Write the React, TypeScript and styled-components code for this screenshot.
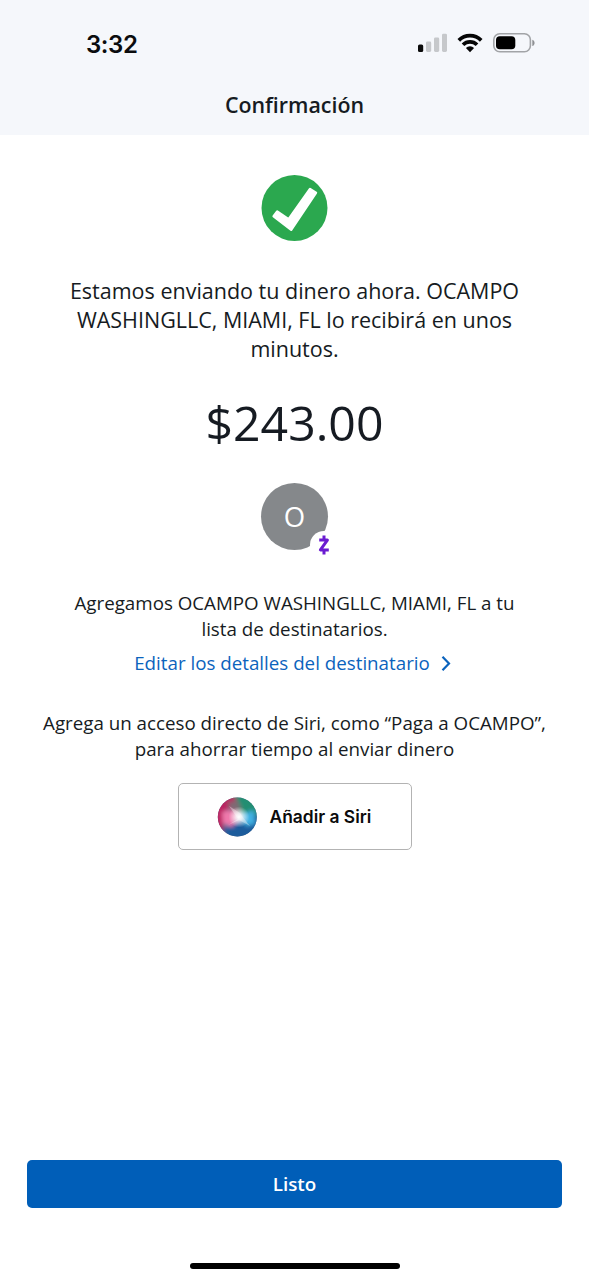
import React from 'react';
import styled, { createGlobalStyle } from 'styled-components';

const GlobalStyle = createGlobalStyle`
  *{box-sizing:border-box}
  body{margin:0;background:#fff}
`;
const Screen = styled.main`
  width:589px;height:1280px;display:flex;flex-direction:column;align-items:center;
  background:#fff;color:#161b22;font-family:"Open Sans",sans-serif;text-align:center;
`;
const Header = styled.header`width:100%;height:135px;background:#f5f7fb;`;
const StatusBar = styled.div`
  display:flex;justify-content:space-between;align-items:center;height:86px;padding:3px 53px 0 86px;
`;
const Time = styled.span`font:600 24px/30px Inter,sans-serif;color:#0b0c0e;letter-spacing:-.4px;`;
const StatusIcons = styled.div`display:flex;align-items:center;gap:10px;margin-top:-3px;`;
const Title = styled.h1`margin:3px 0 0;font-size:21.4px;line-height:32px;font-weight:580;`;
const Check = styled.svg`display:block;margin-top:40px;`;
const Text = styled.p<{ $size: number; $line: number; $top: number }>`
  margin:${p => p.$top}px 0 0;font-size:${p => p.$size}px;line-height:${p => p.$line}px;white-space:nowrap;
`;
const Avatar = styled.div`
  position:relative;width:67px;height:67px;margin-top:28px;border-radius:50%;background:#85888b;color:#fff;
  font-size:27.5px;line-height:67px;
`;
const Badge = styled.svg`position:absolute;left:49px;top:48px;`;
const EditLink = styled.a`
  display:flex;align-items:center;gap:11px;margin-top:8px;margin-right:4px;color:#0b63bd;font-size:18.75px;line-height:26px;white-space:nowrap;
`;
const SiriButton = styled.button`
  display:flex;align-items:center;width:234px;height:67px;margin-top:21px;padding:0 0 0 38px;gap:13px;
  border:1.5px solid #b3b3b3;border-radius:5px;background:#fff;color:#0b0b0b;font:600 17.4px Inter,sans-serif;white-space:nowrap;
`;
const DoneButton = styled.button`
  width:535px;height:48px;margin-top:auto;padding:0 0 1px;border:0;border-radius:5px;background:#005eb8;color:#fff;
  font:550 18.8px/26px "Open Sans",sans-serif;
`;
const HomeIndicator = styled.div`width:210px;height:6px;margin:55px 0 11px;border-radius:3px;background:#000;`;

function SignalIcon() {
  return (
    <svg width="29" height="20" viewBox="0 0 29 20">
      <rect x="0" y="11.5" width="5.2" height="7.5" rx="1.6" fill="#0b0b0b" />
      <g fill="#c6c8cb">
        <rect x="8" y="8.5" width="5.2" height="10.5" rx="1.4" />
        <rect x="16" y="4.5" width="5.2" height="14.5" rx="1.4" />
        <rect x="24" y="0.7" width="5" height="18.3" rx="1.4" />
      </g>
    </svg>
  );
}

function WifiIcon() {
  return (
    <svg width="26" height="20" viewBox="0 0 26 20">
      <g fill="none" stroke="#050505" strokeWidth="3.7">
        <path d="M1.8 7.4C8 1.1 18 1.1 24.2 7.4" />
        <path d="M6 11.7c3.9-3.9 10.1-3.9 14 0" />
      </g>
      <path d="M8.9 15a5.9 5.9 0 0 1 8.2 0L13 19.2z" fill="#050505" />
    </svg>
  );
}

function BatteryIcon() {
  return (
    <svg width="43" height="20" viewBox="0 0 43 20">
      <rect x="0.8" y="0.8" width="36.6" height="18" rx="6" fill="none" stroke="#a2a4a7" strokeWidth="1.6" />
      <rect x="3" y="3.3" width="19.3" height="13" rx="3.8" fill="#000" />
      <path d="M39.3 6.7c3 1 3 5.4 0 6.4z" fill="#8e9093" />
    </svg>
  );
}

function SiriOrb() {
  return (
    <svg width="40" height="40" viewBox="0 0 40 40">
      <defs>
        <clipPath id="orb"><circle cx="20.3" cy="20" r="19.5" /></clipPath>
        <filter id="soft" x="-30%" y="-30%" width="160%" height="160%"><feGaussianBlur stdDeviation="1.9" /></filter>
        <radialGradient id="glow">
          <stop offset="0" stopColor="#fff" />
          <stop offset=".3" stopColor="#fff" stopOpacity=".8" />
          <stop offset="1" stopColor="#fff" stopOpacity="0" />
        </radialGradient>
      </defs>
      <g clipPath="url(#orb)">
        <rect width="40" height="40" fill="#526b88" />
        <g filter="url(#soft)">
          <path d="M16-2h26v22L22 20z" fill="#218e72" />
          <path d="M-2-2h18l6 8-14 8-2 16 8 12H-2z" fill="#bb2360" />
          <path d="M4 34l18-14 20-2v24H10z" fill="#1d5c9c" />
          <path d="M5 15l14-4 3 9-7 10-9-3z" fill="#ee79ac" />
          <path d="M23 18l14-5 1 14-9 2z" fill="#42b2e4" />
          <path d="M10 6l10-3 5 10-9 2z" fill="#7f6973" />
        </g>
        <circle cx="22" cy="20" r="10.5" fill="url(#glow)" />
        <path d="M21 22L12 9l11 7 2 3 8 10-11-6-11 5z" fill="#fff" opacity=".35" />
      </g>
    </svg>
  );
}

export default function App() {
  return (
    <Screen>
      <GlobalStyle />
      <Header>
        <StatusBar>
          <Time>3:32</Time>
          <StatusIcons><SignalIcon /><WifiIcon /><BatteryIcon /></StatusIcons>
        </StatusBar>
        <Title>Confirmación</Title>
      </Header>
      <Check width="67" height="67" viewBox="0 0 67 67">
        <circle cx="33.5" cy="33" r="33" fill="#2ba84f" />
        <path d="M12.6 41.2l3.6-4.8 11.4 7.8L49 14l6 3.8L30.2 54.8z" fill="#fff" stroke="#fff" strokeWidth="2.4" strokeLinejoin="round" />
      </Check>
      <Text $size={21.5} $line={29} $top={34}>Estamos enviando tu dinero ahora. OCAMPO<br />WASHINGLLC, MIAMI, FL lo recibirá en unos<br />minutos.</Text>
      <Text $size={48.2} $line={66} $top={26}>$243.00</Text>
      <Avatar>
        O
        <Badge width="28" height="28" viewBox="0 0 28 28">
          <circle cx="14" cy="14" r="14" fill="#fff" />
          <path d="M9.2 9.1h8.2l-7 9.8h8.4M14 4.4v4.7M14 18.9v4.7" fill="none" stroke="#6a1bd1" strokeWidth="3" strokeLinejoin="round" />
        </Badge>
      </Avatar>
      <Text $size={18.75} $line={26} $top={40}>Agregamos OCAMPO WASHINGLLC, MIAMI, FL a tu<br />lista de destinatarios.</Text>
      <EditLink>
        Editar los detalles del destinatario
        <svg width="10" height="17" viewBox="0 0 10 17"><path d="M1.5 1.7l6.5 6.8-6.5 6.8" fill="none" stroke="#0b63bd" strokeWidth="2.2" /></svg>
      </EditLink>
      <Text $size={18.75} $line={26} $top={34}>Agrega un acceso directo de Siri, como “Paga a OCAMPO”,<br />para ahorrar tiempo al enviar dinero</Text>
      <SiriButton><SiriOrb />Añadir a Siri</SiriButton>
      <DoneButton>Listo</DoneButton>
      <HomeIndicator />
    </Screen>
  );
}
